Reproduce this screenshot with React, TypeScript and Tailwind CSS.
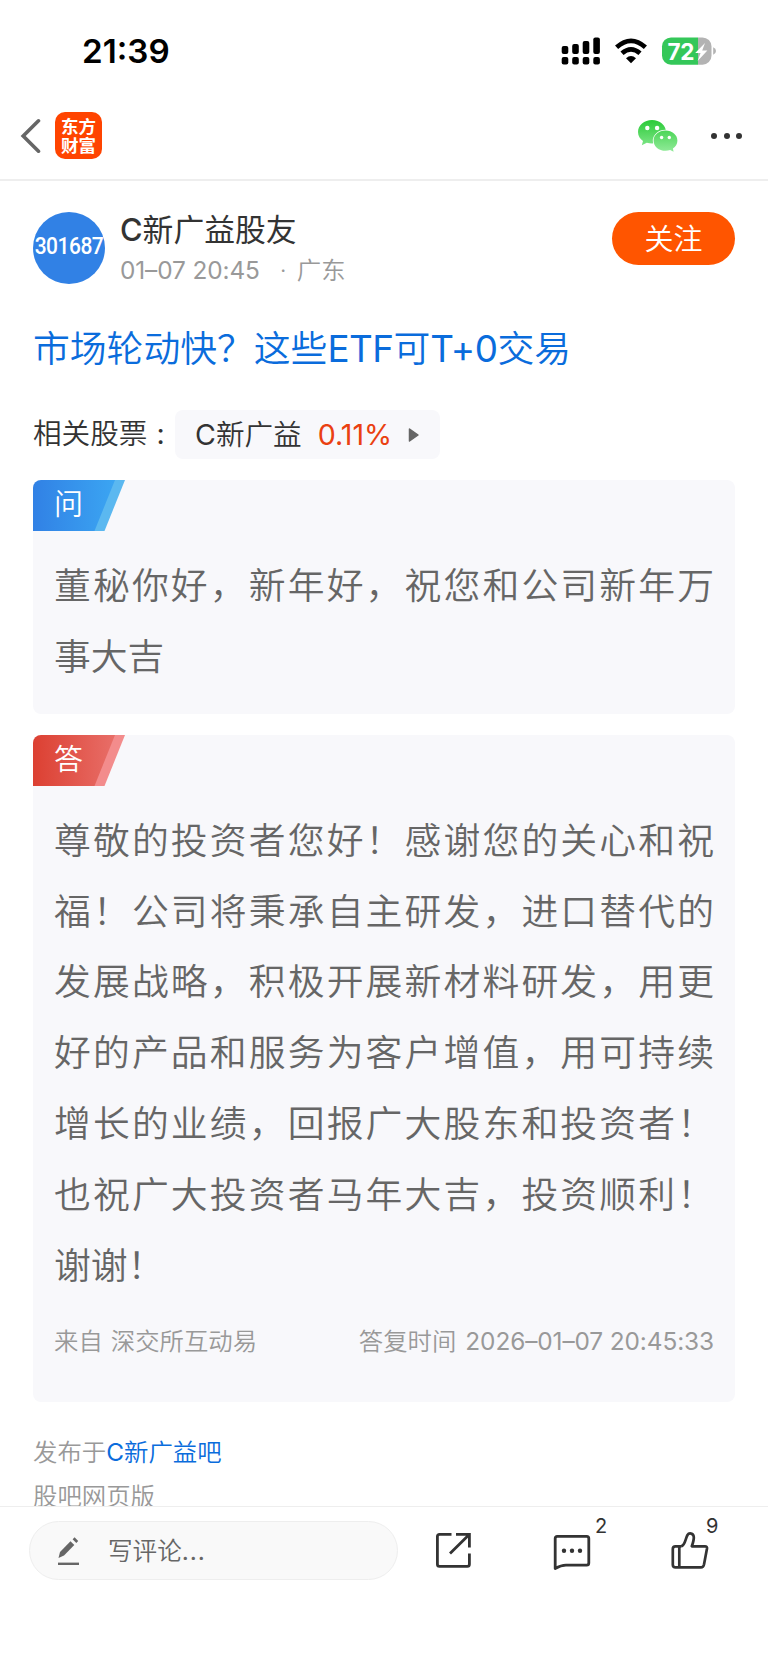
import type { ReactNode } from "react";

type QaCard = {
  kind: "ask" | "answer";
  text: string;
  children?: ReactNode;
};

type BadgeProps = {
  kind: "ask" | "answer";
};

const badgeStyle = {
  ask: { label: "问", from: "#3181e5", to: "#3ba5f2", edge: "#5bb8f0" },
  answer: { label: "答", from: "#dc4032", to: "#e86e68", edge: "#f38c8c" },
};

const question = "董秘你好，新年好，祝您和公司新年万事大吉";
const answer =
  "尊敬的投资者您好！感谢您的关心和祝福！公司将秉承自主研发，进口替代的发展战略，积极开展新材料研发，用更好的产品和服务为客户增值，用可持续增长的业绩，回报广大股东和投资者！也祝广大投资者马年大吉，投资顺利！谢谢！";

export default function App() {
  return (
    <div className="flex h-[1663px] w-[768px] flex-col overflow-hidden bg-white font-['Inter','Noto_Sans_CJK_SC',sans-serif] font-[350] text-[#333333]">
      <StatusBar />
      <NavBar />
      <main className="min-h-0 flex-1 overflow-hidden px-[33px]">
        <Author />
        <h1 className="mt-[41px] flex h-[48px] items-center text-[36.8px] font-[350] whitespace-nowrap text-[#0a6cdc]">
          市场轮动快？这些<span className="font-normal tracking-[-0.5px]">ETF</span>可
          <span className="font-normal tracking-[-0.5px]">T+0</span>交易
        </h1>
        <RelatedStock />
        <Card kind="ask" text={question} />
        <Card kind="answer" text={answer}>
          <div className="mt-[22px] mb-[22px] flex h-[36px] items-center justify-between text-[24.4px] whitespace-nowrap text-[#999999]">
            <span>
              来自<span className="ml-[8px]">深交所互动易</span>
            </span>
            <span>
              答复时间<span className="ml-[9px] font-normal tracking-[-0.1px]">2026–01–07 20:45:33</span>
            </span>
          </div>
        </Card>
        <div className="mt-[28px] text-[24.4px] leading-[44px] text-[#999999]">
          <p>
            发布于
            <span className="text-[#0a6cdc]">
              <span className="font-normal">C</span>新广益吧
            </span>
          </p>
          <p>股吧网页版</p>
        </div>
      </main>
      <BottomBar />
    </div>
  );
}

function StatusBar() {
  return (
    <div className="flex h-[100px] shrink-0 items-start justify-between pt-[31px] pr-[51px] pl-[82px]">
      <span className="text-[33.2px] leading-[41px] font-semibold text-black">21:39</span>
      <svg className="mt-[5px]" width="157" height="30" viewBox="560 36 157 30">
        <g fill="#000">
          <rect x="561.7" y="46" width="6.6" height="8" rx="2" />
          <rect x="572.2" y="44" width="6.6" height="10" rx="2" />
          <rect x="582.7" y="41" width="6.6" height="13" rx="2" />
          <rect x="593.3" y="37.6" width="6.6" height="16.4" rx="2" />
          <rect x="561.7" y="57" width="6.6" height="7.6" rx="2" />
          <rect x="572.2" y="57" width="6.6" height="7.6" rx="2" />
          <rect x="582.7" y="57" width="6.6" height="7.6" rx="2" />
          <rect x="593.3" y="57" width="6.6" height="7.6" rx="2" />
          <path d="M631 63.2L626 58.2Q631 53.6 636 58.2Z" />
        </g>
        <g fill="none" stroke="#000" strokeWidth="4.7">
          <path d="M616.6 47.3Q631 34.5 645.4 47.3" />
          <path d="M622 53.3Q631 45.4 640 53.3" />
        </g>
        <path d="M671 37.4H698V64.7H671A9 9 0 0 1 662 55.7V46.4A9 9 0 0 1 671 37.4Z" fill="#34c759" />
        <path d="M698 37.4H702.5A9 9 0 0 1 711.5 46.4V55.7A9 9 0 0 1 702.5 64.7H698Z" fill="#b3b3b3" />
        <path d="M713.2 47.2Q716 48.2 716 51T713.2 54.8Z" fill="#b3b3b3" />
        <path d="M705 43L695.2 53H700.6L697.6 61L707.4 50.6H702.2Z" fill="#fff" />
        <text x="667.5" y="59.5" fill="#fff" fontSize="22.5" fontWeight="700" letterSpacing="-0.3">
          72
        </text>
      </svg>
    </div>
  );
}

function NavBar() {
  return (
    <header className="flex h-[81px] shrink-0 items-center border-b-2 border-[#eeeeee] pr-[26px] pb-[8px] pl-[20px]">
      <svg className="mt-[1px]" width="21" height="36" viewBox="0 0 21 36">
        <path d="M18.5 2.8L3.2 18L18.5 33.2" fill="none" stroke="#666" strokeWidth="3.6" strokeLinecap="round" />
      </svg>
      <div className="ml-[14px] flex h-[47px] w-[47px] flex-col items-center justify-center rounded-[10px] bg-[#ff4400] text-[17.5px] leading-[19px] font-bold text-white">
        <span>东方</span>
        <span>财富</span>
      </div>
      <svg className="ml-auto" width="42" height="34" viewBox="637 119 42 34">
        <defs>
          <linearGradient id="wechat" gradientUnits="userSpaceOnUse" x1="0" y1="120" x2="0" y2="151">
            <stop offset="0" stopColor="#2bcb38" />
            <stop offset="1" stopColor="#8fea97" />
          </linearGradient>
        </defs>
        <path
          d="M652 120C644.2 120 638 125.2 638 132C638 135.8 640 139 643 141.1L641.8 145.2L646.8 142.7C648.4 143.3 650.2 143.5 652 143.5C659.8 143.5 666 138.8 666 132C666 125.2 659.8 120 652 120Z"
          fill="url(#wechat)"
        />
        <path
          d="M665.5 130.6C658.8 130.6 653.6 135 653.6 140.7S658.8 150.8 665.5 150.8C667.2 150.8 668.7 150.5 670.1 150L673.6 151.8L672.9 148.6C675.6 146.8 677.4 144 677.4 140.7C677.4 135 672.2 130.6 665.5 130.6Z"
          fill="url(#wechat)"
          stroke="#fff"
          strokeWidth="1.6"
          paintOrder="stroke"
        />
        <g fill="#fff">
          <circle cx="647.3" cy="128" r="2.2" />
          <circle cx="657.1" cy="128" r="2.2" />
          <circle cx="661.6" cy="137.5" r="1.7" />
          <circle cx="669.3" cy="137.5" r="1.7" />
        </g>
      </svg>
      <div className="ml-[32px] flex w-[31px] justify-between">
        <i className="h-[6px] w-[6px] rounded-full bg-[#333333]" />
        <i className="h-[6px] w-[6px] rounded-full bg-[#333333]" />
        <i className="h-[6px] w-[6px] rounded-full bg-[#333333]" />
      </div>
    </header>
  );
}

function Author() {
  return (
    <div className="mt-[31px] flex h-[72px] items-start">
      <div className="flex h-[72px] w-[72px] items-center justify-center rounded-full bg-[#3181e5] pb-[3px] text-white">
        <span className="scale-y-110 font-['Roboto',sans-serif] text-[21px] font-medium tracking-[-0.5px]">301687</span>
      </div>
      <div className="ml-[15px] whitespace-nowrap">
        <p className="h-[36px] text-[30.8px] leading-[36px] font-normal">
          <span className="font-medium">C</span>新广益股友
        </p>
        <p className="mt-[4px] flex h-[36px] items-center text-[24.4px] text-[#999999]">
          <span className="font-normal tracking-[-0.1px]">01–07 20:45</span>
          <span className="ml-[20px]">·</span>
          <span className="ml-[10px]">广东</span>
        </p>
      </div>
      <button className="ml-auto flex h-[53px] w-[123px] items-center justify-center rounded-full bg-[#ff5500] pt-[2px] text-[29px] text-white">
        关注
      </button>
    </div>
  );
}

function RelatedStock() {
  return (
    <div className="mt-[37px] flex h-[49px] items-center text-[28.6px] whitespace-nowrap">
      <span className="flex w-[142px]">
        相关股票<span className="ml-[9px] font-normal">:</span>
      </span>
      <div className="flex h-[49px] w-[265px] items-center rounded-lg bg-[#f8f8fb] pt-[1px] pl-[20px]">
        <span>
          <span className="font-normal">C</span>新广益
        </span>
        <span className="ml-[16px] font-normal text-[#ea4011]">0.11%</span>
        <svg className="ml-[16px]" width="12" height="16" viewBox="0 0 12 16">
          <path d="M1.5 2L10 8L1.5 14Z" fill="#666" stroke="#666" strokeWidth="1.5" strokeLinejoin="round" />
        </svg>
      </div>
    </div>
  );
}

function Card({ kind, text, children }: QaCard) {
  return (
    <section className="mt-[21px] overflow-hidden rounded-lg bg-[#f8f8fb] pb-[20.8px]">
      <Badge kind={kind} />
      <div className="px-[21px] pt-[20.2px]">
        <p className="text-justify text-[36.8px] leading-[70.8px] text-[#666666]">{text}</p>
        {children}
      </div>
    </section>
  );
}

function Badge({ kind }: BadgeProps) {
  const { label, from, to, edge } = badgeStyle[kind];
  return (
    <div className="relative h-[51px] w-[92px]">
      <svg className="absolute inset-0" width="92" height="51" viewBox="0 0 92 51">
        <defs>
          <linearGradient id={kind} x1="0" x2="1">
            <stop offset="0" stopColor={from} />
            <stop offset="1" stopColor={to} />
          </linearGradient>
        </defs>
        <path d="M70 0H92L71.5 51H50Z" fill={edge} />
        <path d="M0 0H82L61.5 51H0Z" fill={`url(#${kind})`} />
      </svg>
      <span className="relative block pl-[21px] text-[29px] leading-[50px] text-white">{label}</span>
    </div>
  );
}

function BottomBar() {
  return (
    <footer className="flex h-[157px] shrink-0 items-start border-t border-[#eeeeee] bg-white pt-[14px] pl-[29px]">
      <div className="flex h-[59px] w-[369px] items-center rounded-full border border-[#eeeeee] bg-[#f9f9f9] text-[24.6px] text-[#666666]">
        <svg className="ml-[27px]" width="24" height="30" viewBox="0 0 24 30">
          <path d="M1.5 22L3 16L13.5 5.2L17.3 9L7 19.5Z" fill="#666" />
          <path d="M15.6 3.2L17.6 1.3L21.2 5L19.3 7Z" fill="#666" />
          <path d="M1 27.8H22" stroke="#666" strokeWidth="2.4" />
        </svg>
        <span className="ml-[27px] pt-[2px]">
          写评论<span className="font-normal tracking-[0.9px]">...</span>
        </span>
      </div>
      <svg className="mt-[11px] ml-[37px]" width="37" height="37" viewBox="0 0 37 37" fill="none" stroke="#333" strokeWidth="2.8">
        <path d="M16.5 2.4H4.5Q2.4 2.4 2.4 4.5V32.3Q2.4 34.4 4.5 34.4H32.3Q34.4 34.4 34.4 32.3V21.5" />
        <path d="M21 2.4H34.4V15.5M34 2.8L15 21.5" />
      </svg>
      <div className="relative mt-[13px] ml-[81px]">
        <svg width="38" height="38" viewBox="0 0 38 38">
          <path
            d="M4.2 2.4H33.7Q35.8 2.4 35.8 4.5V29Q35.8 31.1 33.7 31.1H13Q8 31.1 2.2 34.5V4.4Q2.2 2.4 4.2 2.4Z"
            fill="none"
            stroke="#333"
            strokeWidth="2.8"
            strokeLinejoin="round"
          />
          <circle cx="11" cy="16.7" r="2.2" fill="#333" />
          <circle cx="19" cy="16.7" r="2.2" fill="#333" />
          <circle cx="27" cy="16.7" r="2.2" fill="#333" />
        </svg>
        <span className="absolute top-[-20px] left-[42px] text-[20px] leading-[24px] font-normal">2</span>
      </div>
      <div className="relative mt-[9px] ml-[79px]">
        <svg width="39" height="40" viewBox="0 0 39 40" fill="none" stroke="#333" strokeWidth="2.7" strokeLinejoin="round">
          <path d="M11.5 16.3C15.5 14.5 15.2 9 17.5 5C19 2.5 23.5 3 23.8 7C24 10 22.8 13.5 21.8 16.3H35Q37.3 16.3 37 18.5L34 34.5Q33.3 37.4 31 37.4H5.5Q2.8 37.4 2.8 34.7V19Q2.8 16.3 5.5 16.3H11.5" />
          <path d="M9.3 16.3V37.4" />
        </svg>
        <span className="absolute top-[-16px] left-[36px] text-[20px] leading-[24px] font-normal">9</span>
      </div>
    </footer>
  );
}
